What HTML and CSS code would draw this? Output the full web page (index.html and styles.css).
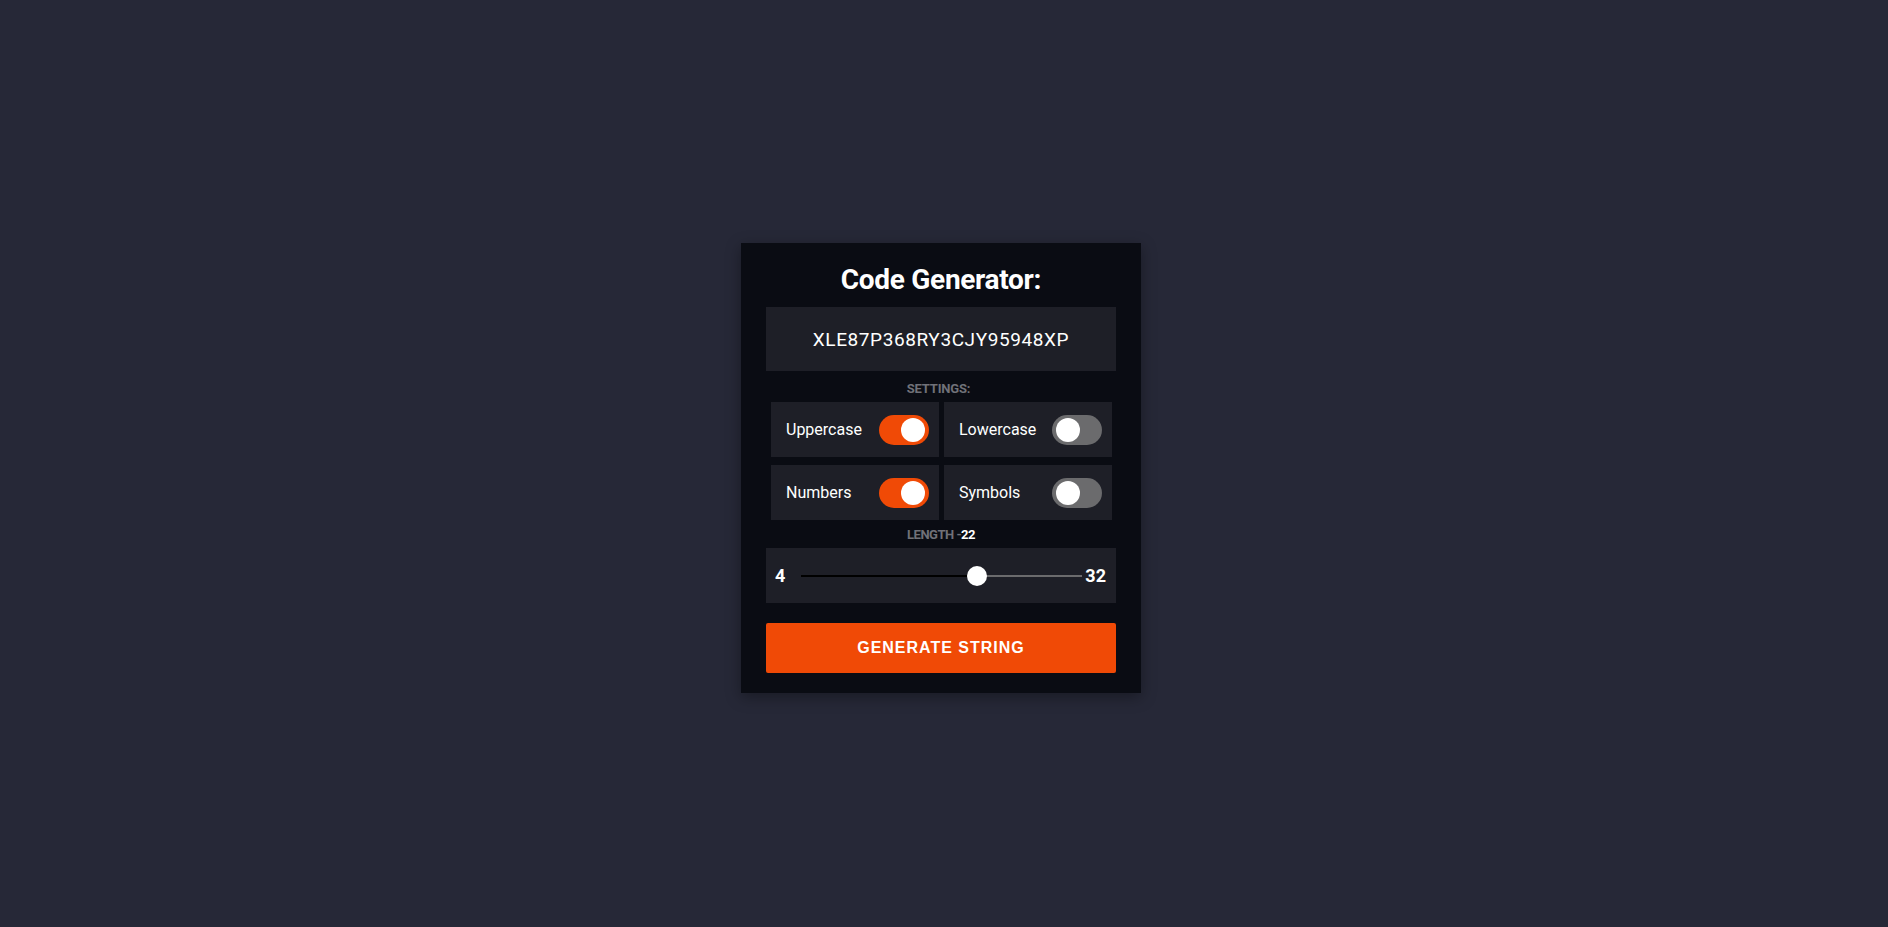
FILE: index.html
```html
<!DOCTYPE html>
<html>
<head>
<meta charset="utf-8">
<link rel="stylesheet" href="styles.css">
<title>Code Generator</title>
</head>
<body>
<main class="page">
  <section class="card">
    <h1 class="title">Code Generator:</h1>
    <div class="output">XLE87P368RY3CJY95948XP</div>
    <div class="section-label settings-label">SETTINGS:</div>
    <div class="settings">
      <div class="setting"><span class="setting-name">Uppercase</span><span class="toggle on"><span class="knob"></span></span></div>
      <div class="setting"><span class="setting-name">Lowercase</span><span class="toggle"><span class="knob"></span></span></div>
      <div class="setting"><span class="setting-name">Numbers</span><span class="toggle on"><span class="knob"></span></span></div>
      <div class="setting"><span class="setting-name">Symbols</span><span class="toggle"><span class="knob"></span></span></div>
    </div>
    <div class="section-label length-label">LENGTH -<span class="length-value">22</span></div>
    <div class="range-box">
      <span class="range-end">4</span>
      <div class="track">
        <div class="track-fill" style="width: 62.5%"></div>
        <div class="thumb" style="left: 62.5%"></div>
      </div>
      <span class="range-end">32</span>
    </div>
    <button class="generate">GENERATE STRING</button>
  </section>
</main>
</body>
</html>
```
FILE: styles.css
```css
* { box-sizing: border-box; }
html, body { margin: 0; padding: 0; }
body {
  background: #262837;
  font-family: Roboto, "Liberation Sans", sans-serif;
  color: #fff;
}
.page {
  min-height: 927px;
  display: flex;
  align-items: center;
  justify-content: center;
  padding: 9px 6px 0 0;
}
.card {
  width: 400px;
  height: 450px;
  background: #0a0c13;
  box-shadow: 0 4px 14px rgba(0, 0, 0, 0.35);
  padding: 20px 25px 20px;
  display: flex;
  flex-direction: column;
}
.title {
  margin: 0;
  text-align: center;
  font-size: 28px;
  font-weight: 700;
  line-height: 34px;
  letter-spacing: -0.3px;
  height: 44px;
}
.output {
  height: 65px;
  background: #1e1f27;
  display: flex;
  align-items: center;
  justify-content: center;
  font-size: 19px;
  letter-spacing: 0.6px;
  font-family: Roboto, "Liberation Sans", sans-serif;
}
.section-label {
  text-align: center;
  font-size: 13px;
  font-weight: 700;
  color: #707178;
  letter-spacing: -0.5px;
  line-height: 14px;
  margin-top: 11px;
}
.settings-label {
  letter-spacing: -0.2px;
  padding-right: 5px;
}
.length-label { margin-top: 8px; }
.length-value { color: #fff; }
.settings {
  margin: 6px 4px 0 5px;
  display: grid;
  grid-template-columns: 1fr 1fr;
  column-gap: 5px;
  row-gap: 8px;
}
.setting {
  height: 55px;
  background: #1e1f27;
  display: flex;
  align-items: center;
  justify-content: space-between;
  padding: 0 10px 0 15px;
}
.setting-name {
  font-size: 16px;
}
.toggle {
  width: 50px;
  height: 30px;
  border-radius: 15px;
  background: #6b6b6d;
  position: relative;
  display: block;
}
.toggle.on { background: #f04a06; }
.knob {
  position: absolute;
  top: 3px;
  left: 4px;
  width: 24px;
  height: 24px;
  border-radius: 50%;
  background: #fff;
}
.toggle.on .knob { left: 22px; }
.range-box {
  margin-top: 6px;
  height: 55px;
  background: #1e1f27;
  display: flex;
  align-items: center;
  padding: 0 10px 0 9px;
}
.range-end {
  font-size: 18px;
  font-weight: 700;
}
.track {
  flex: 1;
  height: 2px;
  background: #6b6b6d;
  position: relative;
  margin: 0 3px 0 16px;
}
.track-fill {
  position: absolute;
  left: 0;
  top: 0;
  height: 2px;
  background: #000;
}
.thumb {
  position: absolute;
  top: 50%;
  width: 20px;
  height: 20px;
  border-radius: 50%;
  background: #fff;
  transform: translate(-50%, -50%);
}
.generate {
  margin-top: 20px;
  height: 50px;
  border: 0;
  border-radius: 2px;
  background: #f04a06;
  color: #fff;
  font-family: "Liberation Sans", Arial, sans-serif;
  font-weight: 700;
  font-size: 16px;
  letter-spacing: 1px;
  cursor: pointer;
}
```
